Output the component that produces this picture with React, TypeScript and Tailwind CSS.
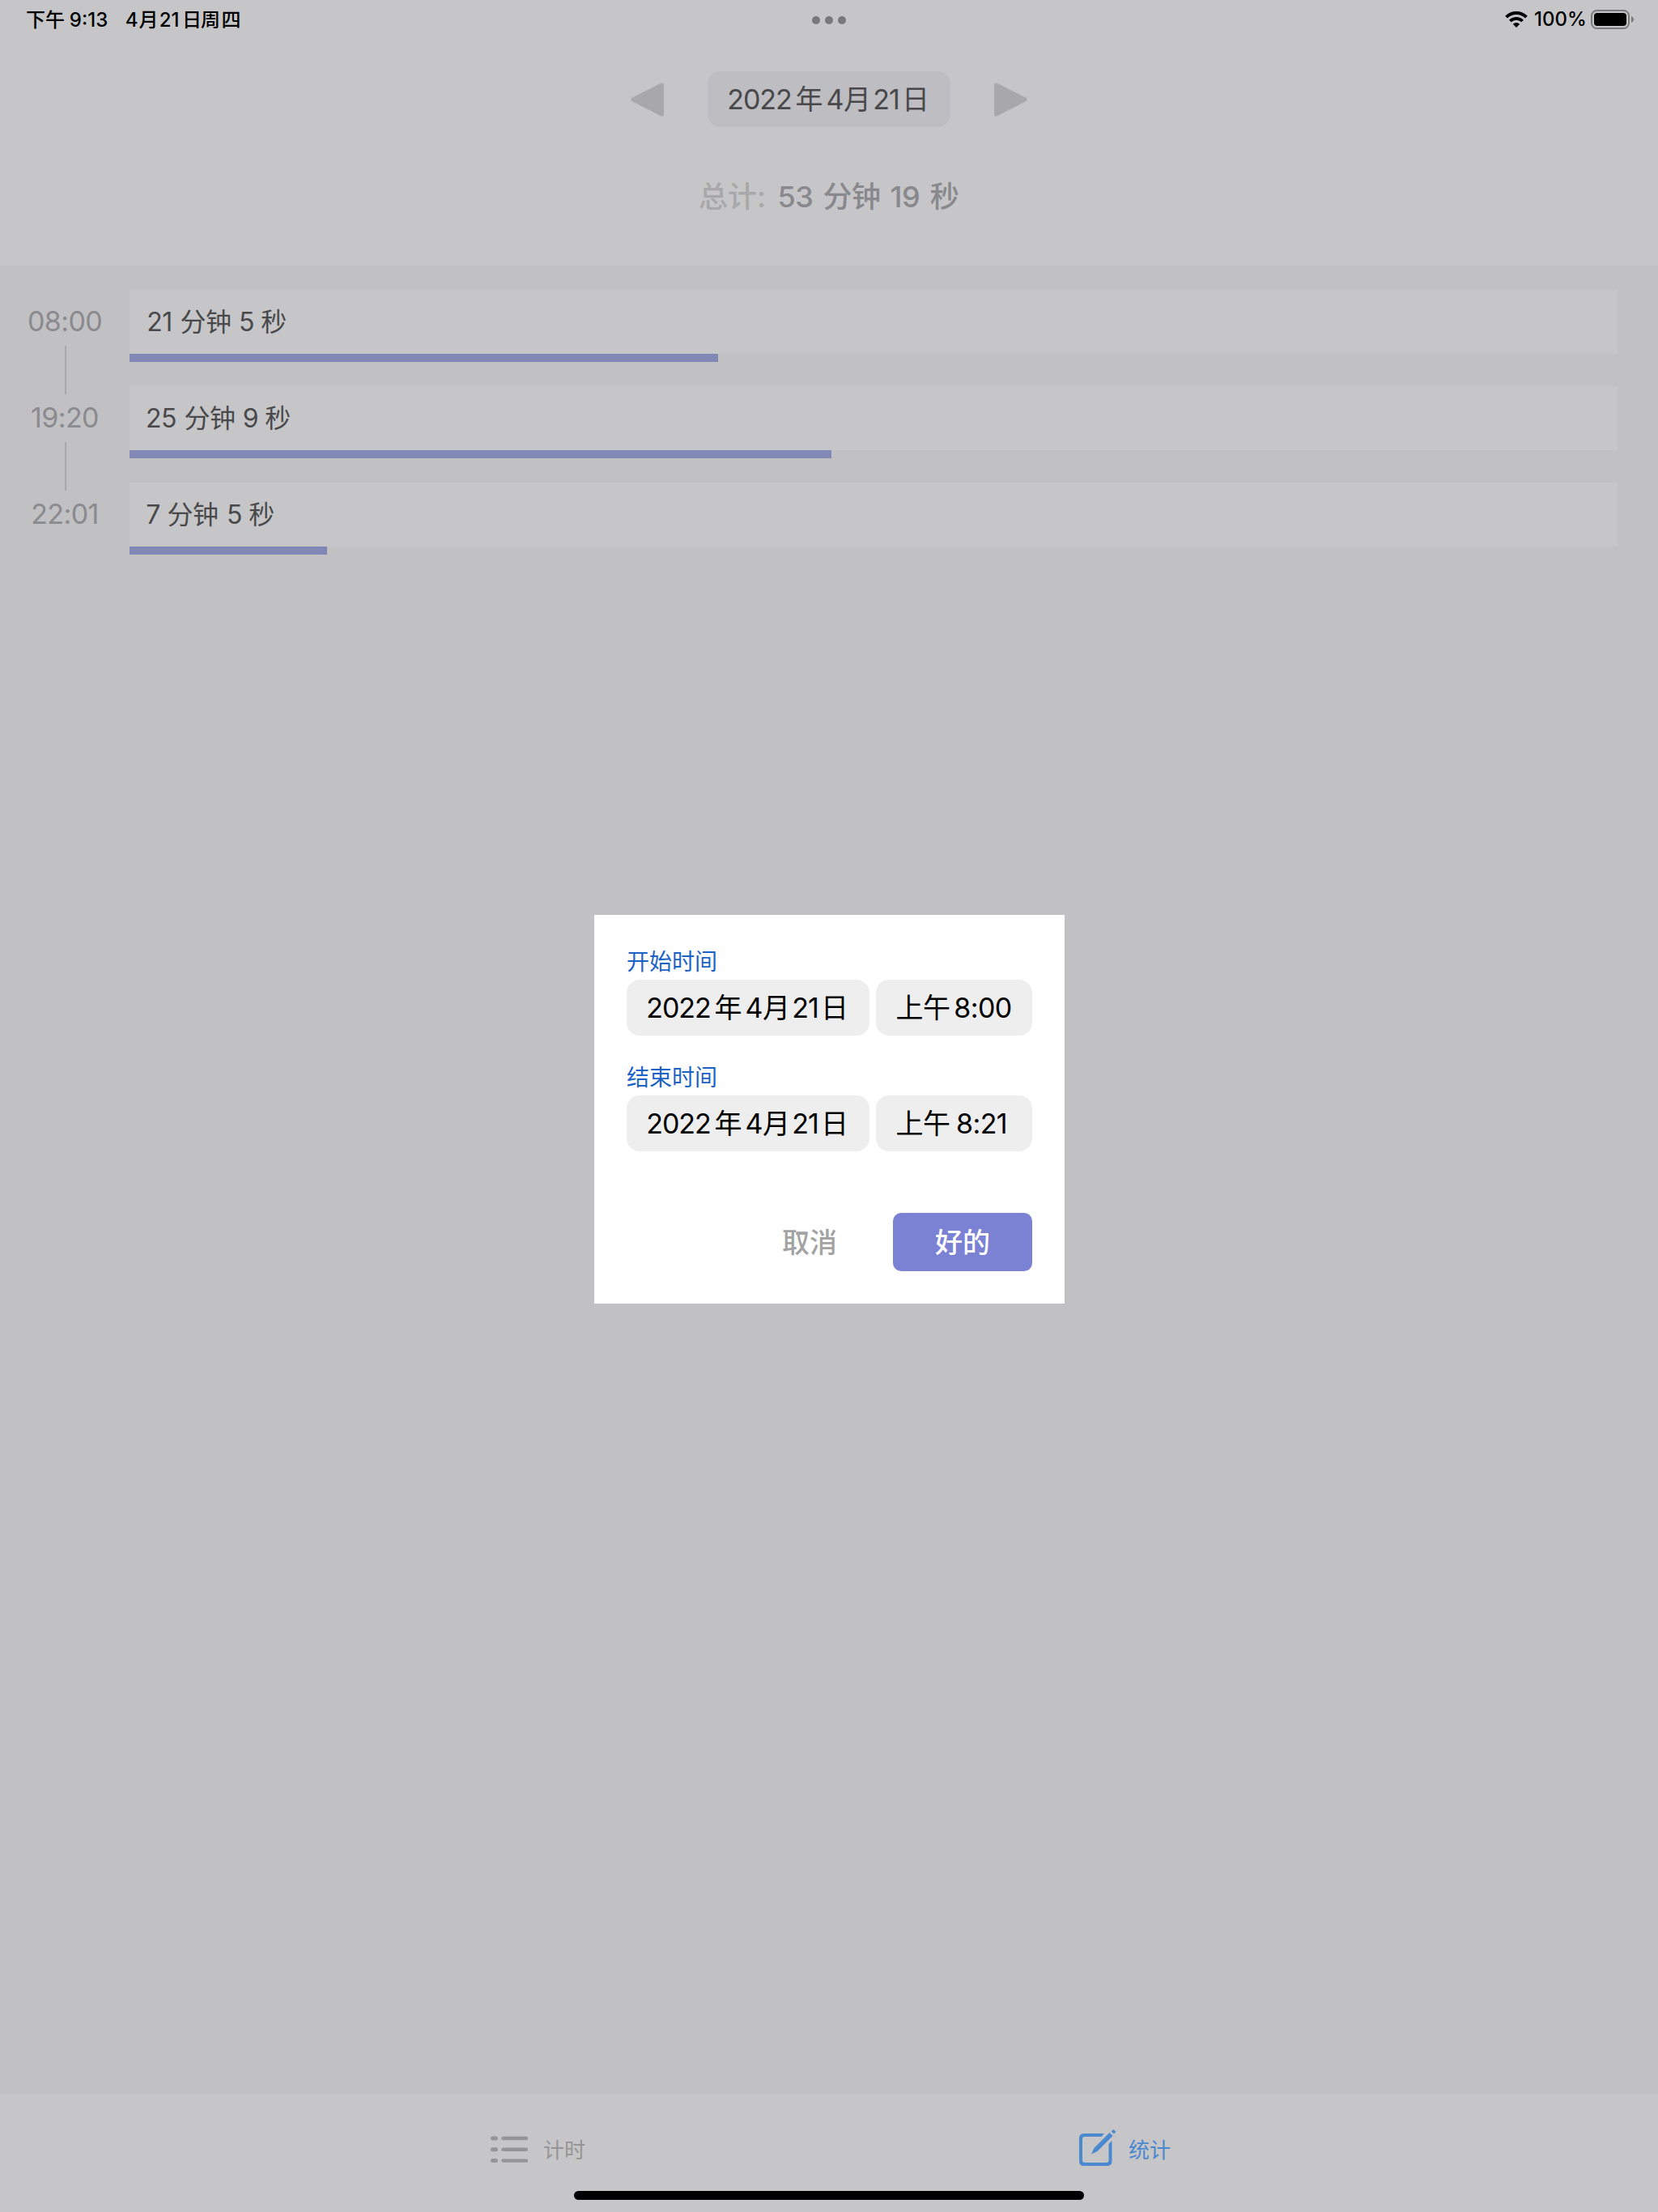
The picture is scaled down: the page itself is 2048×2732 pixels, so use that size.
type Segment = [text: string, width: number];

const font = "font-['Inter','Noto_Sans_CJK_SC',sans-serif]";

/** A line of text whose words sit centred in boxes of a given width. */
function Segments({ items, className = '' }: { items: Segment[]; className?: string }) {
  return (
    <div className={`flex items-center leading-none whitespace-pre ${className}`}>
      {items.map(([text, width], i) => (
        <span key={i} className="flex shrink-0 justify-center" style={{ width }}>
          {text}
        </span>
      ))}
    </div>
  );
}

const dateSegments: Segment[] = [
  ['2022', 82],
  ['年', 40],
  ['4', 24],
  ['月', 31],
  ['21', 41],
  ['日', 31],
];

const rows: { time: string; bar: number; items: Segment[] }[] = [
  { time: '08:00', bar: 727, items: [['21', 34], ['', 8], ['分钟', 64], ['', 9], ['5', 19], ['', 8], ['秒', 32]] },
  { time: '19:20', bar: 867, items: [['25', 38], ['', 9], ['分钟', 64], ['', 9], ['9', 19], ['', 8], ['秒', 32]] },
  { time: '22:01', bar: 244, items: [['7', 18], ['', 8], ['分钟', 64], ['', 10], ['5', 19], ['', 8], ['秒', 32]] },
];

function StatusBar() {
  return (
    <div className="flex h-[48px] items-center justify-between pl-[30px] pr-[30px] font-medium text-black">
      <Segments
        className="w-[900px] pt-[1px] pl-[2px] text-[24px]"
        items={[['下午', 48], ['', 4], ['9:13', 51], ['', 20], ['4', 15], ['月', 27], ['21', 24], ['日', 32], ['周', 14], ['四', 37]]}
      />
      <div className="mt-[2px] flex gap-[6px]">
        <i className="size-[10px] rounded-full bg-[#79797b]" />
        <i className="size-[10px] rounded-full bg-[#79797b]" />
        <i className="size-[10px] rounded-full bg-[#79797b]" />
      </div>
      <div className="flex w-[900px] items-center justify-end">
        <svg width="28" height="20" viewBox="0 0 28 20" className="mr-[8px]">
          <path d="M1.6 7.2A17.6 17.6 0 0 1 26.4 7.2" fill="none" stroke="#000" strokeWidth="4" />
          <path d="M6.4 12A10.8 10.8 0 0 1 21.6 12" fill="none" stroke="#000" strokeWidth="3.8" />
          <path d="M14 20L9.8 15.7A6 6 0 0 1 18.2 15.7Z" fill="#000" />
        </svg>
        <span className="mr-[5px] flex w-[65px] justify-center text-[24px] leading-none">100%</span>
        <svg width="53" height="24" viewBox="0 0 53 24">
          <rect x="1" y="1" width="46" height="22" rx="6.5" fill="none" stroke="#7b7b7c" strokeWidth="2" />
          <rect x="4" y="4" width="40" height="16" rx="4" fill="#000" />
          <path d="M50 8C54 9.4 54 14.6 50 16Z" fill="#7b7b7c" />
        </svg>
      </div>
    </div>
  );
}

function Triangle({ flip = false }: { flip?: boolean }) {
  return (
    <svg width="42" height="42" viewBox="0 0 42 42" className={flip ? 'rotate-180' : ''}>
      <path d="M3 21L38.5 3V39Z" fill="#a8a8aa" stroke="#a8a8aa" strokeWidth="5" strokeLinejoin="round" />
    </svg>
  );
}

function Field({ label, time, timeWidth }: { label: string; time: string; timeWidth: number }) {
  return (
    <div className="flex flex-col">
      <div className="h-[40px] pt-[4px] text-[28px] leading-[28px] text-[#1c62c6]">{label}</div>
      <div className="flex h-[69px] gap-[8px] text-[34px] text-black">
        <Segments className="w-[300px] rounded-[16px] bg-[#eeeeef] pl-[23px] tracking-[-1px]" items={dateSegments} />
        <Segments
          className="w-[193px] rounded-[16px] bg-[#eeeeef] pl-[24px] tracking-[-0.6px]"
          items={[['上午', 68], ['', 5], [time, timeWidth]]}
        />
      </div>
    </div>
  );
}

export default function App() {
  return (
    <div lang="zh-CN" className={`relative flex h-[2732px] w-[2048px] flex-col overflow-hidden bg-[#c1c1c3] ${font}`}>
      <header className="h-[328px] bg-[#c6c6c8]">
        <StatusBar />
        <div className="mt-[40px] flex h-[69px] items-center justify-center gap-[53px]">
          <Triangle />
          <Segments
            className="h-[69px] w-[300px] rounded-[16px] bg-[#bdbdc2] pl-[23px] text-[34px] tracking-[-1px] text-[#49494b]"
            items={dateSegments}
          />
          <Triangle flip />
        </div>
        <div className="mt-[68px] flex justify-center text-[36px] font-medium">
          <Segments className="text-[#a8a8ab]" items={[['总计:', 82], ['', 15]]} />
          <Segments
            className="tracking-[-0.4px] text-[#88888d]"
            items={[['53', 44], ['', 12], ['分钟', 71], ['', 12], ['19', 37], ['', 12], ['秒', 36]]}
          />
        </div>
      </header>

      <main className="flex flex-1 flex-col gap-[30px] pt-[30px] pr-[50px]">
        {rows.map((row, i) => (
          <div key={row.time} className="flex h-[89px]">
            <div className="flex w-[160px] flex-col items-center">
              <span className="flex h-[69px] shrink-0 items-center pt-[8px] text-[34px] leading-none tracking-[-0.6px] text-[#8a8a8f]">
                {row.time}
              </span>
              {i < rows.length - 1 && <i className="ml-[2px] h-[60px] w-[2px] shrink-0 bg-[#a8a8aa]" />}
            </div>
            <div className="flex flex-1 flex-col">
              <Segments className="h-[79px] bg-[#c6c6c8] pl-[20px] text-[32px] tracking-[-0.4px] text-[#49494b]" items={row.items} />
              <div className="h-[10px] bg-[#8288b6]" style={{ width: row.bar }} />
            </div>
          </div>
        ))}
      </main>

      <nav className="flex h-[146px] flex-col bg-[#c6c6c8]">
        <div className="flex h-[120px] pt-[18px]">
          <div className="flex w-1/2 items-center pl-[606px] text-[26px] leading-none text-[#959597]">
            <svg width="46" height="34" viewBox="0 0 46 34" className="mr-[19px] shrink-0" fill="#959597">
              <rect x="0" y="0.500" width="9" height="5" rx="2.5" />
              <rect x="13.300" y="0.800" width="33" height="4.400" rx="2.200" />
              <rect x="0" y="14.300" width="9" height="5" rx="2.500" />
              <rect x="13.300" y="14.600" width="33" height="4.400" rx="2.200" />
              <rect x="0" y="28.100" width="9" height="5" rx="2.500" />
              <rect x="13.300" y="28.400" width="33" height="4.400" rx="2.200" />
            </svg>
            <span className="pt-[2px]">计时</span>
          </div>
          <div className="flex w-1/2 items-center pl-[309px] text-[26px] leading-none text-[#4a88cf]">
            <svg width="46" height="46" viewBox="0 0 46 46" className="mt-[-4px] mr-[15px] shrink-0">
              <path
                d="M31 5L27.500 9H7Q4 9 4 12V38Q4 41 7 41H33.500Q36.500 41 36.500 38V18L40.500 14V39Q40.500 45 34.500 45H6Q0 45 0 39V11Q0 5 6 5Z"
                fill="#4a88cf"
              />
              <path d="M37.500 4L41.500 8L22.500 27L15 30.500L18.500 23Z" fill="#4a88cf" />
              <path d="M42.500 0L45.500 3L43 5.500L39.700 2.500Z" fill="#4a88cf" />
            </svg>
            <span className="pt-[2px]">统计</span>
          </div>
        </div>
        <div className="h-[11px] w-[630px] self-center rounded-full bg-black" />
      </nav>

      <div className="absolute top-[1130px] left-[734px] flex h-[480px] w-[581px] flex-col bg-white px-[40px] pt-[40px]">
        <Field label="开始时间" time="8:00" timeWidth={70} />
        <div className="h-[34px]" />
        <Field label="结束时间" time="8:21" timeWidth={67} />
        <div className="mt-[76px] flex h-[72px] items-center justify-end text-[34px] leading-none font-medium">
          <button className="mr-[69px] pt-[2px] text-[#a3a3a3]">取消</button>
          <button className="h-[72px] w-[172px] rounded-[10px] bg-[#7b82d3] pt-[2px] text-white">好的</button>
        </div>
      </div>
    </div>
  );
}
